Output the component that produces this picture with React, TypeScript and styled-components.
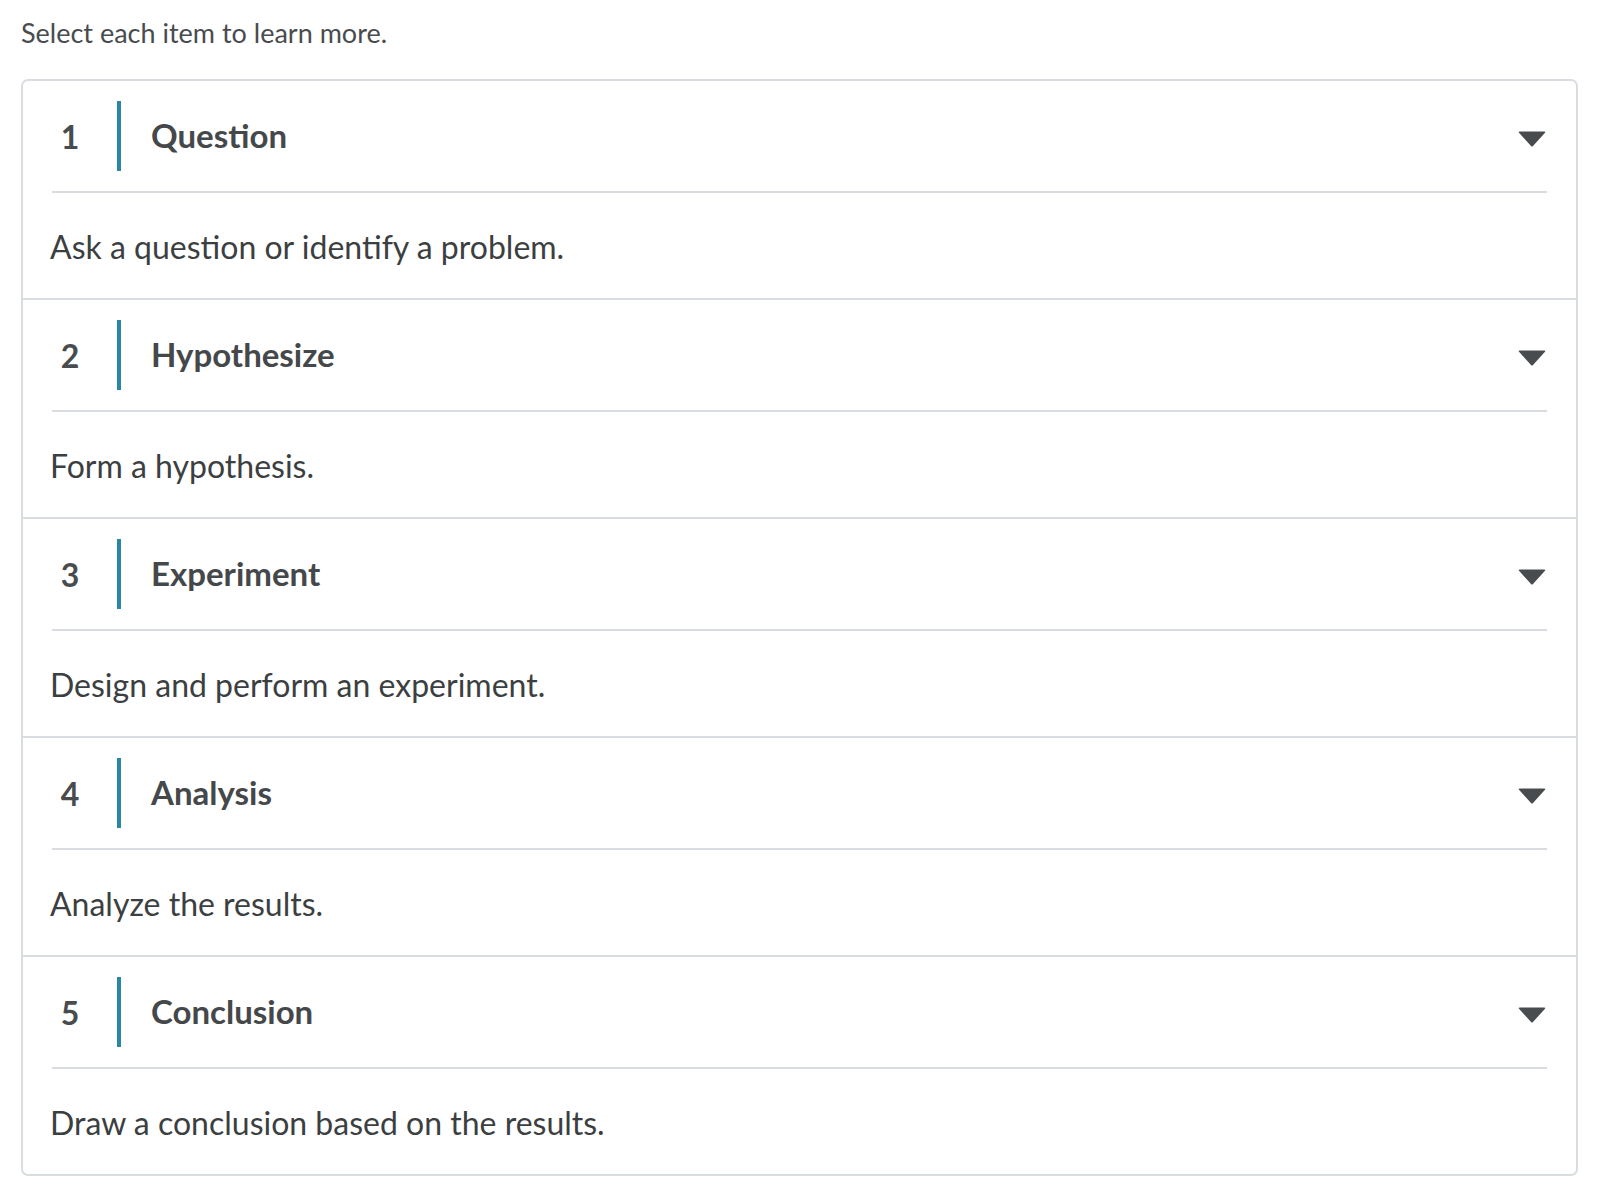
import React from "react";
import styled, { createGlobalStyle } from "styled-components";

const GlobalStyle = createGlobalStyle`
  body {
    margin: 0;
    background: #ffffff;
    font-family: Lato, "Open Sans", sans-serif;
    color: #494c4e;
  }
`;

const Page = styled.div`
  padding: 15px 22px 40px 21px;
`;

const Intro = styled.p`
  margin: 0 0 28px 0;
  font-size: 27px;
  line-height: 36px;
  color: #494c4e;
`;

const Accordion = styled.div`
  border: 2px solid #d9dde2;
  border-radius: 7px;
  background: #fff;
`;

const Section = styled.section<{ $last: boolean }>`
  border-bottom: ${({ $last }) => ($last ? "none" : "2px solid #d9dde2")};
`;

const Header = styled.div`
  display: flex;
  align-items: center;
  height: 110px;
  margin: 0 29px;
  border-bottom: 2px solid #d9dde2;
  cursor: pointer;
`;

const StepNumber = styled.span`
  width: 36px;
  text-align: center;
  font-size: 32px;
  font-weight: 700;
  color: #494c4e;
  margin-right: 29px;
`;

const Bar = styled.span`
  width: 4px;
  height: 70px;
  background: #2a87a3;
  margin-right: 30px;
`;

const Title = styled.h3`
  flex: 1;
  margin: 0 0 2px 0;
  font-size: 33px;
  font-weight: 700;
  color: #45484a;
`;

const Body = styled.div`
  display: flex;
  align-items: center;
  height: 105px;
  padding: 2px 29px 0 27px;
  box-sizing: border-box;
  font-size: 32px;
  color: #3c3f41;
`;

const Caret = () => (
  <svg width="30" height="18" viewBox="0 0 30 18" style={{ marginTop: 6 }}>
    <path
      d="M2.5 1.5 H27.5 Q29 1.5 28 2.7 L16 16 Q15 17.2 14 16 L2 2.7 Q1 1.5 2.5 1.5 Z"
      fill="#494c4e"
    />
  </svg>
);

const steps = [
  { title: "Question", text: "Ask a question or identify a problem." },
  { title: "Hypothesize", text: "Form a hypothesis." },
  { title: "Experiment", text: "Design and perform an experiment." },
  { title: "Analysis", text: "Analyze the results." },
  { title: "Conclusion", text: "Draw a conclusion based on the results." },
];

export default function App() {
  return (
    <>
      <GlobalStyle />
      <Page>
        <Intro>Select each item to learn more.</Intro>
        <Accordion>
          {steps.map((step, i) => (
            <Section key={step.title} $last={i === steps.length - 1}>
              <Header>
                <StepNumber>{i + 1}</StepNumber>
                <Bar />
                <Title>{step.title}</Title>
                <Caret />
              </Header>
              <Body>{step.text}</Body>
            </Section>
          ))}
        </Accordion>
      </Page>
    </>
  );
}
